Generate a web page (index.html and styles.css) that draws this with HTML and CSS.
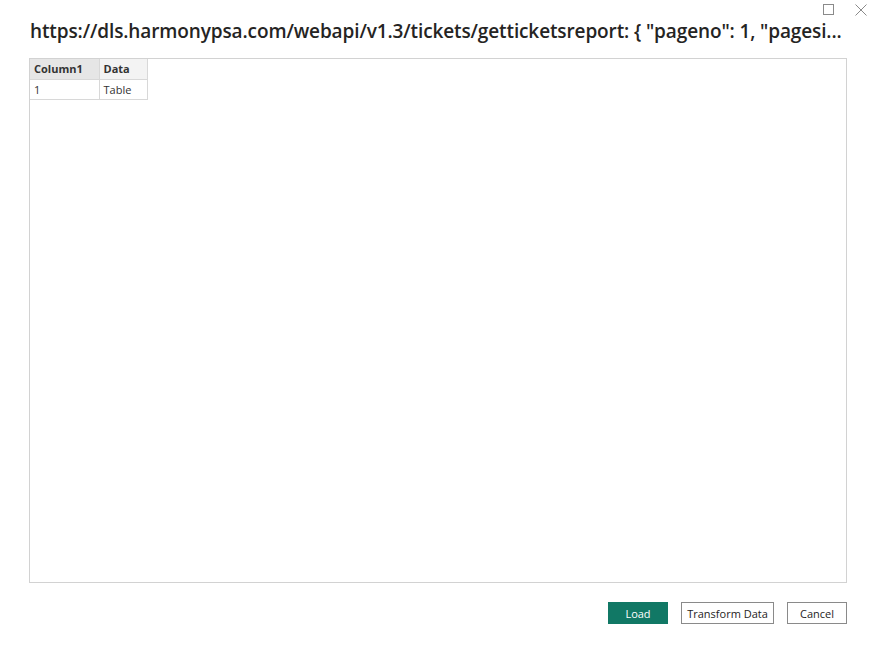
FILE: index.html
```html
<!DOCTYPE html>
<html>
<head>
<meta charset="utf-8">
<link rel="stylesheet" href="styles.css">
</head>
<body>
<div class="dialog">
  <div class="winctl">
    <span class="ctl max"><svg width="12" height="12" viewBox="0 0 12 12"><rect x="0.5" y="0.5" width="10" height="10" fill="none" stroke="#8a8a8a" stroke-width="1"/></svg></span>
    <span class="ctl close"><svg width="12" height="12" viewBox="0 0 12 12"><path d="M0.5 0.5L11.5 11.5M11.5 0.5L0.5 11.5" stroke="#8a8a8a" stroke-width="1" fill="none"/></svg></span>
  </div>
  <h1 class="title">https://dls.harmonypsa.com/webapi/v1.3/tickets/getticketsreport: { "pageno": 1, "pagesi...</h1>
  <div class="preview">
    <table class="grid">
      <thead>
        <tr><th class="c1 sel">Column1</th><th class="c2">Data</th></tr>
      </thead>
      <tbody>
        <tr><td class="c1">1</td><td class="c2">Table</td></tr>
      </tbody>
    </table>
  </div>
  <div class="actions">
    <button class="btn primary">Load</button>
    <button class="btn wide">Transform Data</button>
    <button class="btn">Cancel</button>
  </div>
</div>
</body>
</html>
```
FILE: styles.css
```css
html, body {
  margin: 0;
  padding: 0;
  background: #ffffff;
}
body {
  font-family: "Open Sans", "Noto Sans", "Liberation Sans", sans-serif;
  color: #252423;
}
.dialog {
  width: 876px;
  height: 655px;
  box-sizing: border-box;
  padding: 0 29px 0 29px;
  display: flex;
  flex-direction: column;
  position: relative;
}
.winctl {
  position: absolute;
  top: 4px;
  right: 9px;
  display: flex;
  gap: 20px;
}
.ctl {
  display: block;
  width: 12px;
  height: 12px;
}
.ctl svg { display: block; }
.title {
  margin: 16px 0 0 1px;
  font-size: 19px;
  font-weight: 600;
  line-height: 30px;
  height: 30px;
  white-space: nowrap;
  overflow: hidden;
  letter-spacing: -0.12px;
  color: #252423;
}
.preview {
  margin-top: 12px;
  height: 525px;
  box-sizing: border-box;
  border: 1px solid #d2d2d2;
  background: #fff;
}
.grid {
  border-collapse: collapse;
  font-size: 11px;
  color: #333;
}
.grid th, .grid td {
  border: 1px solid #d8d8d8;
  height: 20px;
  box-sizing: border-box;
  padding: 0 4px;
  text-align: left;
  white-space: nowrap;
}
.grid tr:first-child th { border-top: none; }
.grid .c1 { border-left: none; width: 69px; }
.grid .c2 { width: 48px; }
.grid th {
  font-weight: 700;
  background: #f3f3f3;
}
.grid th.sel { background: #e6e6e6; }
.actions {
  display: flex;
  justify-content: flex-end;
  gap: 13px;
  margin-top: 19px;
  padding-right: 0;
}
.btn {
  font-family: "Open Sans", "Noto Sans", "Liberation Sans", sans-serif;
  font-size: 11px;
  height: 22px;
  box-sizing: border-box;
  border: 1px solid #8a8a8a;
  background: #fff;
  color: #252423;
  padding: 0;
  width: 60px;
  margin: 0;
  white-space: nowrap;
  cursor: default;
}
.btn.wide { width: 93px; }
.btn.primary {
  background: #117865;
  border-color: #117865;
  color: #fff;
}
```
